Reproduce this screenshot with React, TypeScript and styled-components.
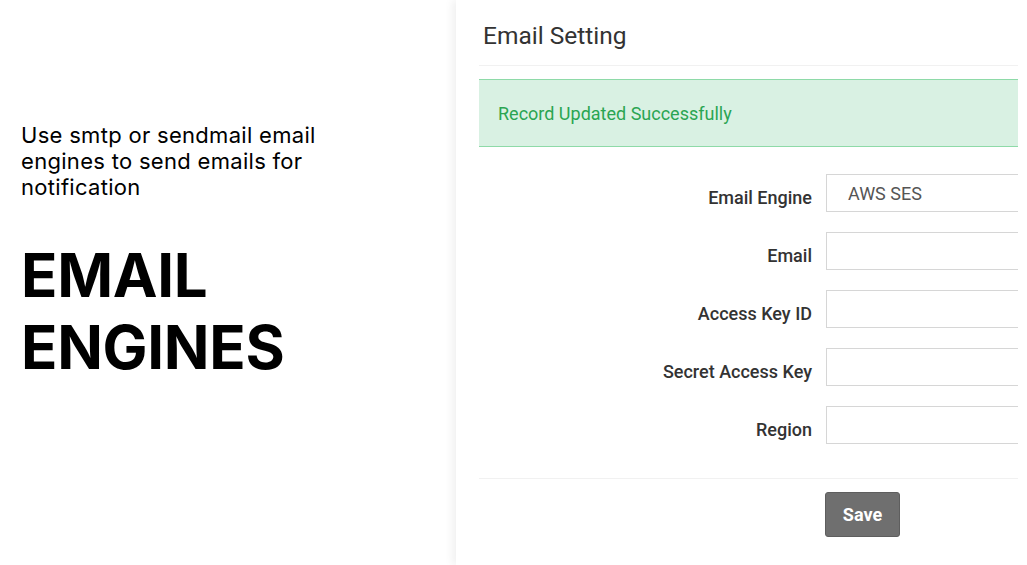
import React from "react";
import styled, { createGlobalStyle } from "styled-components";

const Global = createGlobalStyle`
  html, body { margin: 0; padding: 0; background: #ffffff; }
  body { width: 1027px; height: 565px; overflow: hidden; }
  * { box-sizing: border-box; }
`;

const Page = styled.div`
  display: flex;
  width: 1027px;
  height: 565px;
  background: #ffffff;
`;

const Intro = styled.div`
  width: 456px;
  flex: none;
  padding: 122px 0 0 21px;
  font-family: Inter, "Liberation Sans", sans-serif;
  color: #000;
`;

const Lead = styled.p`
  margin: 0;
  width: 320px;
  font-size: 22px;
  line-height: 26px;
  font-weight: 400;
  letter-spacing: 0.3px;
`;

const Heading = styled.h1`
  margin: 39px 0 0;
  font-size: 60px;
  line-height: 72px;
  font-weight: 700;
  letter-spacing: -0.3px;
`;

const Panel = styled.div`
  flex: 1;
  background: #fff;
  box-shadow: -4px 0 8px rgba(0, 0, 0, 0.06);
  padding: 0 9px 0 23px;
  font-family: Roboto, "Liberation Sans", sans-serif;
  overflow: hidden;
`;

const Inner = styled.div`
  overflow: hidden;
`;

const Title = styled.h2`
  margin: 0;
  padding: 21px 0 0 4px;
  height: 66px;
  border-bottom: 1px solid #f1f1f1;
  font-size: 24.5px;
  font-weight: 400;
  line-height: 30px;
  color: #333;
`;

const Alert = styled.div`
  margin-top: 13px;
  height: 68px;
  display: flex;
  align-items: center;
  padding-left: 19px;
  background: #d9f1e3;
  border-top: 1px solid #8edaa8;
  border-bottom: 1px solid #8edaa8;
  color: #2aa552;
  font-size: 18px;
`;

const Form = styled.div`
  display: grid;
  grid-template-columns: 333px 1fr;
  column-gap: 14px;
  row-gap: 20px;
  margin-top: 27px;
  padding-bottom: 34px;
  border-bottom: 1px solid #f1f1f1;
`;

const Label = styled.label`
  display: flex;
  align-items: center;
  justify-content: flex-end;
  padding-top: 8px;
  height: 38px;
  font-size: 18px;
  font-weight: 500;
  color: #333;
`;

const Input = styled.div`
  height: 38px;
  width: 260px;
  border: 1px solid #d6d6d6;
  padding-left: 21px;
  display: flex;
  align-items: center;
  font-size: 18px;
  color: #555;
`;

const Actions = styled.div`
  display: flex;
  padding: 13px 0 0 346px;
`;

const SaveButton = styled.button`
  width: 75px;
  height: 45px;
  background: #6f6f6f;
  border: 1px solid #5e5e5e;
  border-radius: 3px;
  color: #fff;
  font-family: Roboto, "Liberation Sans", sans-serif;
  font-size: 18px;
  font-weight: 700;
  padding: 0;
`;

const fields: { label: string; value?: string }[] = [
  { label: "Email Engine", value: "AWS SES" },
  { label: "Email" },
  { label: "Access Key ID" },
  { label: "Secret Access Key" },
  { label: "Region" },
];

export default function App() {
  return (
    <>
      <Global />
      <Page>
        <Intro>
          <Lead>Use smtp or sendmail email engines to send emails for notification</Lead>
          <Heading>
            EMAIL
            <br />
            ENGINES
          </Heading>
        </Intro>
        <Panel>
          <Inner>
            <Title>Email Setting</Title>
            <Alert>Record Updated Successfully</Alert>
            <Form>
              {fields.map((f) => (
                <React.Fragment key={f.label}>
                  <Label>{f.label}</Label>
                  <Input>{f.value}</Input>
                </React.Fragment>
              ))}
            </Form>
            <Actions>
              <SaveButton>Save</SaveButton>
            </Actions>
          </Inner>
        </Panel>
      </Page>
    </>
  );
}
